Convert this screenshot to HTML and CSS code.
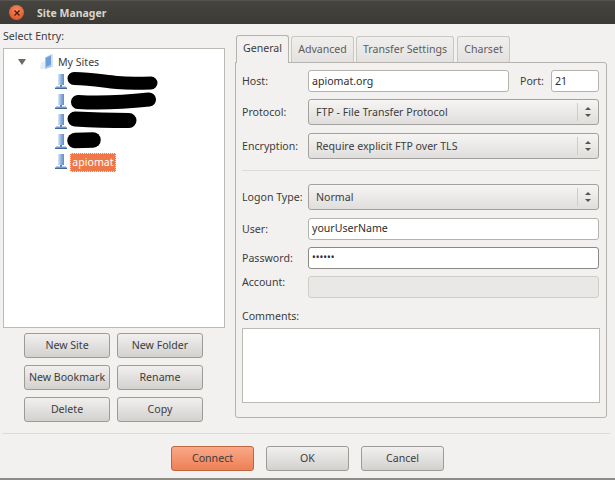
FILE: index.html
```html
<!DOCTYPE html>
<html lang="en">
<head>
<meta charset="utf-8">
<title>Site Manager</title>
<link rel="stylesheet" href="styles.css">
</head>
<body>
<div class="window">
  <header class="titlebar">
    <span class="close"><svg width="8" height="8" viewBox="0 0 8 8"><path d="M1.5 1.5l5 5M6.500 1.500l-5 5" stroke="#4a1a08" stroke-width="1.3" fill="none"/></svg></span>
    <span class="title">Site Manager</span>
  </header>
  <div class="content">
    <section class="left">
      <div class="select-label">Select Entry:</div>
      <div class="tree">
        <div class="node root">
          <svg class="arrow" width="8" height="6" viewBox="0 0 8 6"><path d="M0 0h8L4 6z" fill="#6a6a66"/></svg>
          <svg class="folder" width="14" height="16" viewBox="0 0 14 16"><path d="M5 3.500L11 .5h2v12l-8 2.500z" fill="#a9c6ea"/><path d="M6 4l5-2.500v9L6 13z" fill="#6a9edc"/><path d="M1 8.500l4-1V15l-3.500 .5L0 14z" fill="#e6edf6"/><path d="M11 .5h2v12h-2z" fill="#d5e3f3"/></svg>
          <span>My Sites</span>
        </div>
        <div class="node site"><svg class="server" width="12" height="16" viewBox="0 0 12 16"><use href="#srv"/></svg>
          <svg class="blob" width="92" height="20" viewBox="0 0 92 20"><path d="M7 7.500C25 8 35 10 50 11.500S75 12 84 12" stroke="#000" stroke-width="13" stroke-linecap="round" fill="none"/></svg></div>
        <div class="node site"><svg class="server" width="12" height="16" viewBox="0 0 12 16"><use href="#srv"/></svg>
          <svg class="blob b2" width="88" height="20" viewBox="0 0 88 20"><path d="M7 11C25 12 55 11 78 8.500" stroke="#000" stroke-width="14" stroke-linecap="round" fill="none"/></svg></div>
        <div class="node site"><svg class="server" width="12" height="16" viewBox="0 0 12 16"><use href="#srv"/></svg>
          <svg class="blob" width="70" height="20" viewBox="0 0 70 20"><path d="M8 8C25 9 45 9.500 62 9.500" stroke="#000" stroke-width="15" stroke-linecap="round" fill="none"/></svg></div>
        <div class="node site"><svg class="server" width="12" height="16" viewBox="0 0 12 16"><use href="#srv"/></svg>
          <svg class="blob" width="36" height="20" viewBox="0 0 36 20"><path d="M8 9.500L26 9" stroke="#000" stroke-width="15.500" stroke-linecap="round" fill="none"/></svg></div>
        <div class="node site"><svg class="server" width="12" height="16" viewBox="0 0 12 16"><use href="#srv"/></svg>
          <span class="selected">apiomat</span></div>
      </div>
      <div class="site-buttons">
        <button class="btn">New Site</button>
        <button class="btn">New Folder</button>
        <button class="btn">New Bookmark</button>
        <button class="btn">Rename</button>
        <button class="btn">Delete</button>
        <button class="btn">Copy</button>
      </div>
    </section>
    <section class="right">
      <nav class="tabs">
        <span class="tab active">General</span>
        <span class="tab t-adv">Advanced</span>
        <span class="tab t-tra">Transfer Settings</span>
        <span class="tab t-cha">Charset</span>
      </nav>
      <div class="panel">
        <div class="row host-row">
          <label class="lbl">Host:</label>
          <div class="field host">apiomat.org</div>
          <label class="port-lbl">Port:</label>
          <div class="field port">21</div>
        </div>
        <div class="row combo-row">
          <label class="lbl">Protocol:</label>
          <div class="combo"><span class="combo-text">FTP - File Transfer Protocol</span><span class="spin"><i class="up"></i><i class="down"></i></span></div>
        </div>
        <div class="row combo-row">
          <label class="lbl">Encryption:</label>
          <div class="combo"><span class="combo-text">Require explicit FTP over TLS</span><span class="spin"><i class="up"></i><i class="down"></i></span></div>
        </div>
        <hr class="sep panel-sep">
        <div class="row combo-row">
          <label class="lbl">Logon Type:</label>
          <div class="combo"><span class="combo-text">Normal</span><span class="spin"><i class="up"></i><i class="down"></i></span></div>
        </div>
        <div class="row field-row">
          <label class="lbl">User:</label>
          <div class="field wide">yourUserName</div>
        </div>
        <div class="row field-row">
          <label class="lbl">Password:</label>
          <div class="field wide focus pw">••••••</div>
        </div>
        <div class="row field-row top-lbl">
          <label class="lbl">Account:</label>
          <div class="field wide disabled"></div>
        </div>
        <div class="comments-label">Comments:</div>
        <div class="comments"></div>
      </div>
    </section>
  </div>
  <hr class="sep footer-sep">
  <footer class="actions">
    <button class="btn big primary">Connect</button>
    <button class="btn big">OK</button>
    <button class="btn big">Cancel</button>
  </footer>
</div>
<svg width="0" height="0" class="defs"><defs><linearGradient id="srvg" x1="0" x2="1" y1="0" y2="0"><stop offset="0" stop-color="#dde7f4"/><stop offset=".5" stop-color="#8fb2de"/><stop offset="1" stop-color="#5f8cc6"/></linearGradient><g id="srv"><path d="M3 0h6v11H3z" fill="url(#srvg)"/><path d="M5 11h2v2H5z" fill="#5c7ea8"/><path d="M1 12.500h10v1H1z" fill="#7d9cc4"/><path d="M0 13.500h12v1.500H0z" fill="#3f6aa0"/></g></defs></svg>
</body>
</html>
```
FILE: styles.css
```css
* { box-sizing: border-box; }
html, body { margin: 0; padding: 0; }
body {
  width: 615px; height: 480px; overflow: hidden;
  background: #f2f1f0;
  font-family: "Noto Sans", "Open Sans", sans-serif;
  font-size: 10.6px; color: #3c3c3c;
}
.window { height: 480px; border-bottom: 2px solid #8d8c89; }
.defs { position: absolute; }

.titlebar {
  height: 24px; display: flex; align-items: center;
  background: linear-gradient(#45443f, #3b3a36);
  border-top: 1px solid #55544f;
}
.close {
  width: 15px; height: 15px; margin-left: 9px; border-radius: 50%;
  display: flex; align-items: center; justify-content: center;
  background: radial-gradient(circle at 50% 35%, #f58a60, #d9481c);
}
.title { margin-left: 13px; font-weight: 700; font-size: 10.500px; color: #d9d6cd; }

.content { display: flex; height: 394px; }
.left { width: 235px; padding-left: 3px; }
.select-label { height: 24px; padding-top: 5px; line-height: 15px; }
.tree {
  width: 222px; height: 280px; background: #fff;
  border: 1px solid #bcbab5; padding-top: 3px;
}
.node { height: 20px; display: flex; align-items: center; position: relative; }
.root .arrow { margin-left: 14px; }
.root .folder { margin-left: 14px; }
.root span { margin-left: 4px; }
.site { padding-left: 51px; }
.blob { flex: none; margin-top: -2px; }
.b2 { margin-left: 4px; }
.selected {
  margin-left: 3px; height: 19px; line-height: 18px; width: 46px; text-align: center;
  background: #f07746; color: #fff; outline: 1px dotted #fde0d0; outline-offset: -1px;
}

.btn {
  font: inherit; color: #3c3c3c; padding: 0 0 2px; cursor: default;
  height: 25px; border: 1px solid #9d9b96; border-radius: 3px;
  background: linear-gradient(#f1f0ef, #d2d1ce);
  white-space: nowrap;
}
.site-buttons {
  display: grid; grid-template-columns: 86px 86px; column-gap: 7px; row-gap: 7px;
  margin: 5px 0 0 21px;
}

.right { width: 372px; padding-top: 10px; }
.tabs { display: flex; height: 28px; align-items: flex-end; padding-left: 1px; position: relative; }
.tab {
  height: 26px; line-height: 24px; text-align: center; color: #5d5d5a;
  border: 1px solid #c9c7c2; border-bottom: none; border-radius: 3px 3px 0 0;
  background: linear-gradient(#f0efee, #e3e2e0); margin-right: 2px;
}
.tab.active {
  width: 53px; height: 28px; color: #3c3c3c; background: #f2f1f0;
  border-color: #b5b3ae; position: relative; top: 1px;
}
.t-adv { width: 63px; }
.t-tra { width: 98px; margin-right: 3px; }
.t-cha { width: 53px; }

.panel {
  height: 356px; border: 1px solid #b5b3ae; border-radius: 0 3px 3px 3px;
  padding: 7px 6px 0 6px; background: #f2f1f0;
}
.row { display: flex; align-items: center; }
.lbl { width: 66px; flex: none; }
.field-row .lbl { padding-bottom: 1px; }
.host-row { height: 22px; }
.combo-row { height: 26px; margin-top: 8px; }
.host-row + .combo-row { margin-top: 7px; }
.field {
  height: 22px; line-height: 19px; background: #fff; padding: 0 3px;
  border: 1px solid #b5b3ae; border-radius: 3px; color: #2e2e2e;
}
.host, .port { line-height: 20px; }
.host { width: 201px; }
.port-lbl { margin-left: 11px; width: 31px; }
.port { width: 48px; }
.wide { width: 291px; }
.focus { border-color: #8b8985; }
.pw { font-size: 10px; }
.disabled { background: #e9e8e6; border-color: #d0cec9; }
.field-row { height: 22px; margin-top: 7px; }
.combo-row + .field-row { margin-top: 8px; }
.top-lbl { align-items: flex-start; }
.top-lbl .lbl { line-height: 13px; }
.combo {
  width: 291px; height: 26px; flex: none; display: flex; align-items: center;
  border: 1px solid #a3a19c; border-radius: 3px;
  background: linear-gradient(#f6f5f4, #dfdedc);
}
.combo-text { flex: 1; padding: 0 0 1px 7px; }
.spin {
  width: 20px; height: 18px; border-left: 1px solid #cfcdc9; margin-right: 1px;
  display: flex; flex-direction: column; align-items: center; justify-content: center; gap: 4px;
}
.spin i { display: block; width: 0; height: 0; border-left: 3px solid transparent; border-right: 3px solid transparent; }
.spin .up { border-bottom: 3px solid #55544f; }
.spin .down { border-top: 3px solid #55544f; }
.sep { border: 0; border-top: 1px solid #dcdad6; margin: 0; }
.panel-sep { margin: 11px 0 13px; }
.comments-label { margin-top: 11px; height: 19px; line-height: 15px; }
.comments { height: 75px; width: 358px; background: #fff; border: 1px solid #bcbab5; }

.footer-sep { margin: 15px 5px 0 2px; }
.actions { display: flex; gap: 12px; padding: 12px 0 0 171px; }
.big { width: 83px; }
.primary { background: linear-gradient(#f9a888, #ee8055); border-color: #b8673f; }
```
